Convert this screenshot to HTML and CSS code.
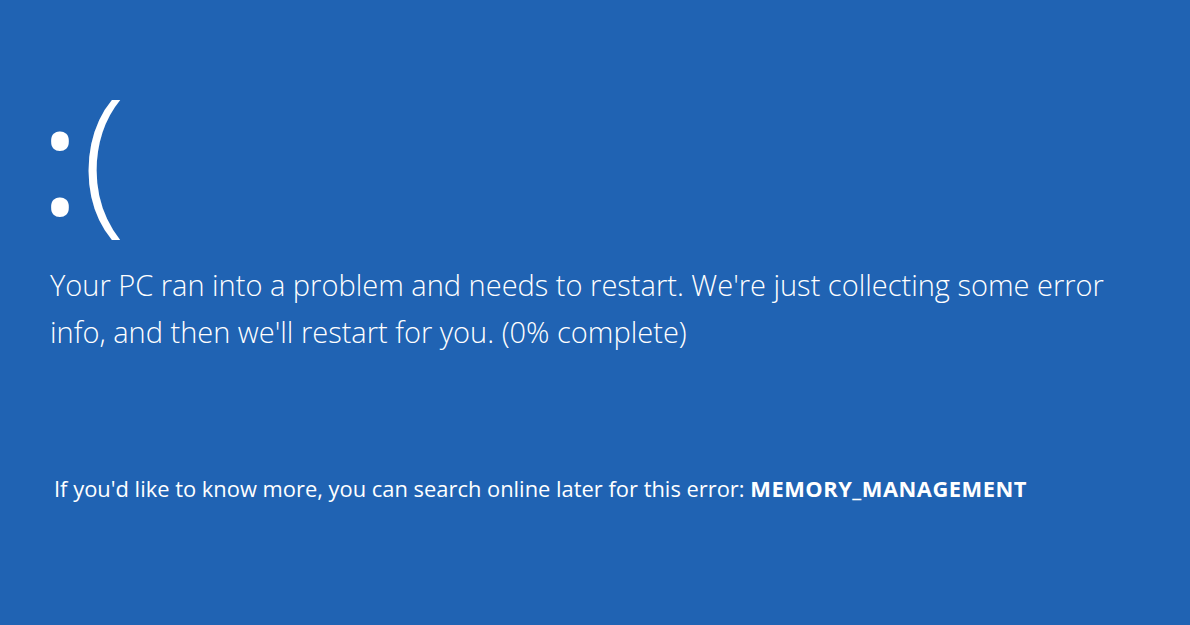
FILE: index.html
```html
<!DOCTYPE html>
<html lang="en">
<head>
<meta charset="utf-8">
<title>Blue screen</title>
<link rel="stylesheet" href="styles.css">
</head>
<body>
<main class="screen">
  <div class="face"><span class="eyes">:</span><span class="mouth">(</span></div>
  <p class="message">Your PC ran into a problem and needs to restart. We're just collecting some error info, and then we'll restart for you. (0% complete)</p>
  <p class="more">If you'd like to know more, you can search online later for this error: <strong class="code">MEMORY_MANAGEMENT</strong></p>
</main>
</body>
</html>
```

FILE: styles.css
```css
html, body {
  margin: 0;
  height: 100%;
}
body {
  background: #2063b3;
  color: #ffffff;
  font-family: "Open Sans", "Noto Sans", sans-serif;
  overflow: hidden;
}
.screen {
  display: flex;
  flex-direction: column;
  align-items: flex-start;
  padding: 58px 0 0 40px;
}
.face {
  display: flex;
  align-items: baseline;
  gap: 2px;
  font-size: 160px;
  line-height: 190px;
}
.eyes {
  font-weight: 500;
  font-size: 152px;
}
.mouth {
  font-weight: 300;
}
.message {
  margin: 9px 0 0;
  width: 1085px;
  font-size: 29px;
  font-weight: 300;
  line-height: 47px;
  padding-left: 10px;
}
.more {
  margin: 119px 0 0;
  font-size: 21.9px;
  font-weight: 400;
  padding-left: 14px;
}
.code {
  font-weight: 700;
  letter-spacing: 0.5px;
}
```
